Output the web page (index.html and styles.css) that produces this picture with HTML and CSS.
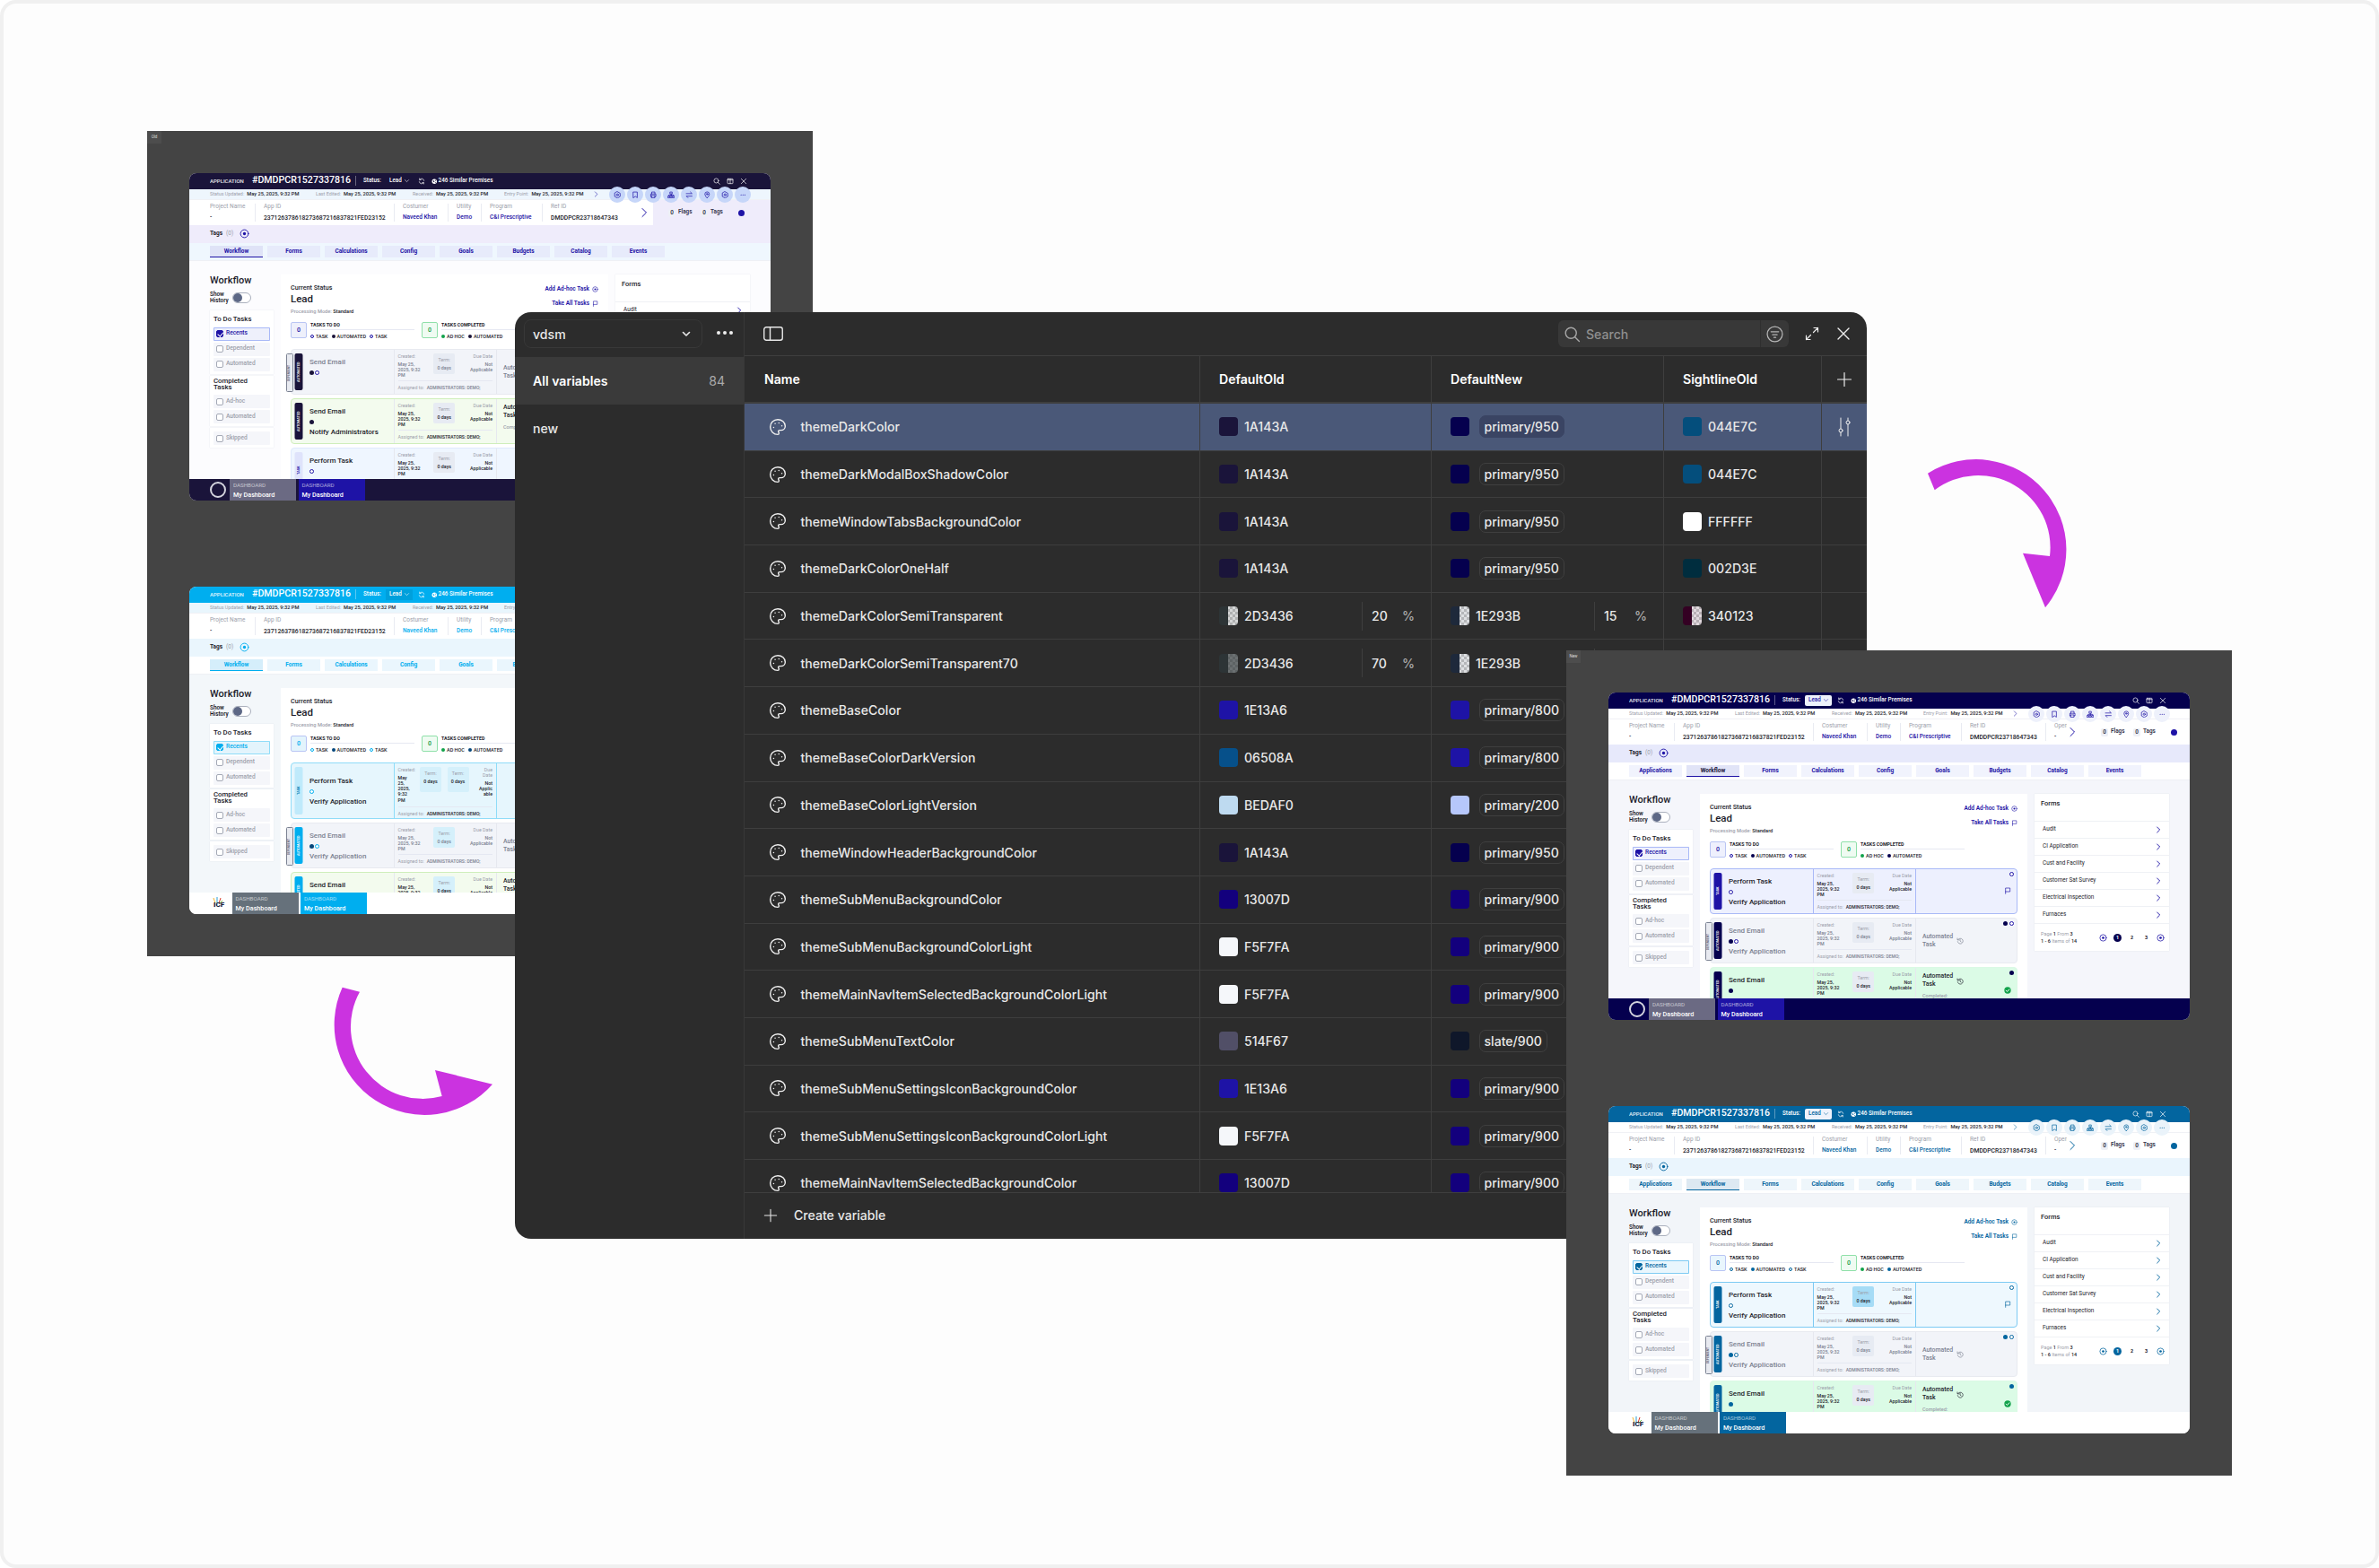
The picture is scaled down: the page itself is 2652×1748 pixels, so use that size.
FILE: index.html
```html
<!DOCTYPE html>
<html lang="en">
<head>
  <meta charset="UTF-8">
  <title>Theme variables</title>
  <link rel="stylesheet" href="styles.css">
</head>
<body>

<!-- shared icons -->
<svg class="defs" width="0" height="0">
  <symbol id="i-palette" viewBox="0 0 24 24"><path d="M12 2C6.5 2 2 6.5 2 12s4.5 10 10 10c.926 0 1.648-.746 1.648-1.688 0-.437-.18-.835-.437-1.125-.29-.289-.438-.652-.438-1.125a1.64 1.64 0 0 1 1.668-1.668h1.996c3.051 0 5.555-2.503 5.555-5.554C21.965 6.012 17.461 2 12 2z"/><circle cx="13.5" cy="6.5" r=".9" class="fill"/><circle cx="17.5" cy="10.5" r=".9" class="fill"/><circle cx="8.5" cy="7.5" r=".9" class="fill"/><circle cx="6.5" cy="12.5" r=".9" class="fill"/></symbol>
  <symbol id="i-down" viewBox="0 0 12 12"><path d="M2.5 4.5 6 8l3.5-3.5"/></symbol>
  <symbol id="i-right" viewBox="0 0 12 12"><path d="M4 1.5 8.5 6 4 10.5"/></symbol>
  <symbol id="i-x" viewBox="0 0 12 12"><path d="M2 2l8 8M10 2l-8 8"/></symbol>
  <symbol id="i-plus" viewBox="0 0 12 12"><path d="M6 1v10M1 6h10"/></symbol>
  <symbol id="i-search" viewBox="0 0 12 12"><circle cx="5.2" cy="5.2" r="3.8"/><path d="M8 8l3 3"/></symbol>
  <symbol id="i-cols" viewBox="0 0 12 12"><rect x="1.5" y="2" width="9" height="8" rx="1"/><path d="M6 2v8M1.5 4h9"/></symbol>
  <symbol id="i-refresh" viewBox="0 0 12 12"><path d="M10 5a4 4 0 0 0-7.200-1.500M2 7a4 4 0 0 0 7.200 1.500"/><path d="M2.500 1.500v2.300h2.300M9.500 10.500V8.200H7.200"/></symbol>
  <symbol id="i-globe" viewBox="0 0 12 12"><circle cx="6" cy="6" r="5" class="fill"/><path class="knock" d="M3 3.500l3 1.500v2l-2 .5zM7.500 2.500l2 1.500-1.500 1.500zM7 8l2-.5-1 2z"/></symbol>
  <symbol id="i-pin" viewBox="0 0 12 12"><path d="M6 11S2.500 7.500 2.500 4.800a3.500 3.500 0 0 1 7 0C9.500 7.500 6 11 6 11z"/><circle cx="6" cy="4.800" r="1.200"/></symbol>
  <symbol id="i-gear" viewBox="0 0 12 12"><path d="M6 1l4.300 2.500v5L6 11 1.700 8.500v-5z"/><circle cx="6" cy="6" r="1.600"/></symbol>
  <symbol id="i-mark" viewBox="0 0 12 12"><path d="M3 1.500h6v9L6 8.300 3 10.500z"/></symbol>
  <symbol id="i-print" viewBox="0 0 12 12"><path d="M3.500 4.500v-3h5v3M3.500 8.500H2V4.500h8v4H8.500"/><path d="M3.500 7h5v3.500h-5z"/></symbol>
  <symbol id="i-org" viewBox="0 0 12 12"><rect x="4.500" y="1.500" width="3" height="3"/><rect x="1" y="8" width="2.500" height="2.500"/><rect x="4.700" y="8" width="2.500" height="2.500"/><rect x="8.500" y="8" width="2.500" height="2.500"/><path d="M6 4.500V8M2.200 8V6.200h7.600V8"/></symbol>
  <symbol id="i-swap" viewBox="0 0 12 12"><path d="M1.500 4h9L8 1.500M10.500 8h-9L4 10.500"/></symbol>
  <symbol id="i-more" viewBox="0 0 12 12"><circle cx="3" cy="6" r=".8" class="fill"/><circle cx="6" cy="6" r=".8" class="fill"/><circle cx="9" cy="6" r=".8" class="fill"/></symbol>
  <symbol id="i-add" viewBox="0 0 12 12"><circle cx="6" cy="6" r="4.800"/><circle cx="6" cy="6" r="1.800" class="fill"/></symbol>
  <symbol id="i-flag" viewBox="0 0 12 12"><path d="M2.500 11V1.500h7.500v6H2.500"/></symbol>
  <symbol id="i-back" viewBox="0 0 12 12"><path d="M2.500 3.800a4.500 4.500 0 1 1-.6 3.200"/><path d="M1.500 1.500v2.800h2.800M6 3.500V6l1.800 1.500"/></symbol>
  <symbol id="i-tick" viewBox="0 0 12 12"><circle cx="6" cy="6" r="5.500" class="fill"/><path class="knock-line" d="M3.300 6.200l2 2 3.500-4"/></symbol>
</svg>

<div class="canvas">

  <section class="frame frame-old" id="frameOld"></section>

  <!-- variables window -->
  <section class="panel">
    <aside class="side">
      <div class="side-top">
        <div class="coll-select"><span>vdsm</span><svg class="ico chev-sm"><use href="#i-down"/></svg></div>
        <div class="coll-more"><i></i><i></i><i></i></div>
      </div>
      <div class="side-item on"><span>All variables</span><span class="count">84</span></div>
      <div class="side-item"><span>new</span></div>
    </aside>

    <div class="main">
      <div class="toolbar">
        <svg class="ico panel-toggle" viewBox="0 0 22 16"><rect x=".75" y=".75" width="20.500" height="14.500" rx="2.500"/><path d="M7.500 1v14"/></svg>
        <div class="search">
          <div class="search-box">
            <svg class="ico search-ico"><use href="#i-search"/></svg>
            <span>Search</span>
          </div>
          <div class="search-filter">
            <svg class="ico" viewBox="0 0 18 18"><circle cx="9" cy="9" r="8"/><path d="M5 6.500h8M6.500 9.500h5M8 12.500h2"/></svg>
          </div>
        </div>
        <svg class="ico expand" viewBox="0 0 16 16"><path d="M10 1.500h4.500V6M14.500 1.500 9.500 6.500M6 14.500H1.500V10M1.500 14.500l5-5"/></svg>
        <svg class="ico close"><use href="#i-x"/></svg>
      </div>

      <div class="grid thead">
        <div class="cell cell-name">Name</div>
        <div class="cell cell-a">DefaultOld</div>
        <div class="cell cell-b">DefaultNew</div>
        <div class="cell cell-c">SightlineOld</div>
        <div class="cell cell-end"><svg class="ico add-col"><use href="#i-plus"/></svg></div>
      </div>

      <div class="tbody" id="rows"></div>

      <div class="create">
        <svg class="ico add-var"><use href="#i-plus"/></svg>
        <span>Create variable</span>
      </div>
    </div>
  </section>

  <section class="frame frame-new" id="frameNew"></section>

  <svg class="arrow arrow-left" viewBox="0 0 720 660"><path d="M125 122A302 302 0 0 0 627 446L435 399L458 486A241 241 0 0 1 183 137Z"/></svg>
  <svg class="arrow arrow-right" viewBox="0 0 720 660"><path d="M147 143A302 302 0 0 1 540 592L465 410L555 420A241 241 0 0 0 170 199Z"/></svg>
</div>

<script src="script.js"></script>
</body>
</html>
```

FILE: styles.css
```css
* { box-sizing: border-box; }

body {
  margin: 0;
  background: #fff;
  font-family: Inter, "Liberation Sans", sans-serif;
}

.defs { position: absolute; }
.fill { fill: currentColor; stroke: none; }

.ico {
  fill: none;
  stroke: currentColor;
  stroke-width: 1.2;
  stroke-linecap: round;
  stroke-linejoin: round;
}

.canvas {
  position: relative;
  width: 2652px;
  height: 1748px;
  overflow: hidden;
  background: #fdfdfd;
  border-radius: 18px;
  box-shadow: inset 0 0 0 4px #f0f0f0;
}

/* arrows */
.arrow {
  position: absolute;
  width: 240px;
  height: 220px;
  fill: #cb33e0;
}
.arrow-left { left: 340px; top: 1060px; }
.arrow-right { left: 2100px; top: 480px; }

/* grey artboards */
.frame {
  position: absolute;
  width: 742px;
  height: 920px;
  padding: 47px;
  display: flex;
  flex-direction: column;
  gap: 96px;
  background: #444;
}
.frame-old { left: 164px; top: 146px; }
.frame-new { left: 1746px; top: 725px; }

.frame-tag {
  position: absolute;
  left: 0;
  top: 0;
  width: 16px;
  height: 14px;
  background: #4d4d4d;
  color: #ddd;
  font: 4.500px/14px Roboto, sans-serif;
  text-align: center;
}

/* big dark window */
.panel {
  position: absolute;
  left: 574px;
  top: 348px;
  width: 1507px;
  height: 1033px;
  display: flex;
  background: #2c2c2c;
  border-radius: 18px;
  overflow: hidden;
  color: #e8e8e8;
  font-size: 14.100px;
  font-weight: 500;
}

.side {
  width: 256px;
  flex: none;
  border-right: 1px solid #383838;
}

.side-top {
  height: 50px;
  padding: 8px 0 0 10px;
  display: flex;
}

.coll-select {
  width: 199px;
  height: 32px;
  padding: 0 11px 0 9px;
  display: flex;
  align-items: center;
  justify-content: space-between;
  border: 1px solid #383838;
  border-radius: 8px;
}
.chev-sm { width: 12px; height: 12px; stroke-width: 1.6; }

.coll-more {
  margin: 13px 0 0 16px;
  display: flex;
  gap: 3px;
}
.coll-more i {
  width: 4px;
  height: 4px;
  border-radius: 50%;
  background: #eee;
}

.side-item {
  height: 52px;
  padding: 0 21px 0 20px;
  display: flex;
  align-items: center;
  justify-content: space-between;
}
.side-item.on {
  height: 53px;
  background: #3a3a3a;
  color: #fff;
  font-weight: 600;
}
.count { color: #aaa; font-weight: 400; }

.main {
  flex: 1;
  min-width: 0;
  display: flex;
  flex-direction: column;
}

.toolbar {
  height: 49px;
  flex: none;
  padding: 0 17px 0 21px;
  display: flex;
  align-items: center;
  border-bottom: 1px solid #3e3e3e;
}
.panel-toggle { width: 22px; height: 16px; stroke-width: 1.4; }

.search {
  width: 257px;
  height: 30px;
  margin-left: auto;
  display: flex;
  background: #383838;
  border-radius: 6px;
  color: #8f8f8f;
}
.search-box {
  width: 226px;
  padding-left: 6px;
  display: flex;
  align-items: center;
  gap: 6px;
  border-right: 1px solid #2f2f2f;
}
.search-ico { width: 19px; height: 19px; stroke-width: .9; color: #a5a5a5; }
.search-filter {
  flex: 1;
  display: flex;
  align-items: center;
  justify-content: center;
  color: #b4b4b4;
}
.search-filter svg { width: 19px; height: 19px; }
.expand { width: 16px; height: 16px; margin-left: 18px; color: #eee; }
.close { width: 18px; height: 18px; margin-left: 18px; color: #eee; stroke-width: .9; }

.grid {
  display: grid;
  grid-template-columns: 507px 258px 259px 176px 51px;
}
.thead {
  height: 53px;
  flex: none;
  border-bottom: 2px solid #3e3e3e;
  color: #fff;
  font-weight: 600;
}

.tbody {
  flex: 1;
  min-height: 0;
  overflow: hidden;
}

.row {
  height: 52.7px;
  border-bottom: 1px solid #3e3e3e;
}
.row.on { background: #4a5878; }

.cell {
  display: flex;
  align-items: center;
  min-width: 0;
}
.cell-name { padding-left: 22px; }
.row .cell-name { padding-left: 27px; gap: 15.500px; }
.cell-a, .cell-b, .cell-c { padding-left: 21px; border-left: 1px solid #3e3e3e; }
.cell-end { justify-content: center; border-left: 1px solid #3e3e3e; }

.pal { width: 20px; height: 20px; color: #f0f0f0; stroke-width: 1.7; }
.add-col { width: 18px; height: 18px; stroke-width: .8; color: #eee; }
.tune { width: 16px; height: 22px; color: #eee; stroke-width: 1; }

.sw {
  width: 21px;
  height: 21px;
  flex: none;
  margin-right: 7px;
  border-radius: 4px;
  background: var(--sw);
}
.sw.alpha {
  background:
    linear-gradient(90deg, var(--sw) 50%, var(--sw-a) 50%),
    repeating-conic-gradient(#fff 0 25%, #cfcfcf 0 50%) 0 0 / 6px 6px;
}

.token {
  margin-left: 3.500px;
  height: 25px;
  padding: 0 5px;
  display: flex;
  align-items: center;
  border: 1px solid #3f3f3f;
  border-radius: 7px;
}
.row.on .token { background: #3a4463; border-color: #3a4463; }

.opacity {
  width: 77px;
  height: 32px;
  margin-left: auto;
  padding: 0 18px 0 10px;
  display: flex;
  align-items: center;
  justify-content: space-between;
  border-left: 1px solid #3e3e3e;
}
.opacity i { color: #aaa; font-style: normal; }

.create {
  height: 52px;
  flex: none;
  padding: 0 0 2px 21px;
  display: flex;
  align-items: center;
  gap: 18px;
  border-top: 1px solid #3e3e3e;
}
.add-var { width: 16px; height: 16px; stroke-width: .8; }

/* app screenshots inside the artboards */
.app {
  --head: #1a143a;
  --accent: #1e13a6;
  --edge: #a9b9f7;
  --soft: #eef0fb;
  --meta: #eef6fd;
  --tags: #efecfb;
  --tabs: #eff7fe;
  --tab: #e7ebfb;
  --tab-on: #dfe3f7;
  --bg: #fcfcfe;
  --foot: #1a143a;
  --tool: #c6d6f9;
  --dim: #9ca0ab;
  position: relative;
  width: 648px;
  height: 365px;
  flex: none;
  display: flex;
  flex-direction: column;
  overflow: hidden;
  border-radius: 8px;
  background: #fff;
  color: #1d1d2b;
  font: 500 5.700px/1.2 Roboto, sans-serif;
}
.app svg { display: block; }
.app .ico { stroke-width: 1; }

.app.sky {
  --head: #00aeef;
  --accent: #00aeef;
  --edge: #8fdcf8;
  --soft: #e3f4fc;
  --meta: #e9f6fd;
  --tags: #eaf6fd;
  --tabs: #fff;
  --tab: #eaf6fd;
  --tab-on: #d5eefb;
  --bg: #f3f7fa;
  --foot: #fff;
  --tool: #c6e9f9;
}
.app.indigo {
  --head: #05004e;
  --soft: #eef0fd;
  --meta: #fff;
  --tags: #e7e9fb;
  --tabs: #fff;
  --tab: #f1f3fd;
  --tab-on: #e1e4f7;
  --bg: #f5f6fb;
  --foot: #05004e;
  --tool: #eef1fb;
}
.app.ocean {
  --head: #03659f;
  --accent: #03659f;
  --edge: #7dcaf3;
  --soft: #e9f6fd;
  --meta: #fff;
  --tags: #eaf5fd;
  --tabs: #fff;
  --tab: #eef6fb;
  --tab-on: #dde9f2;
  --bg: #f2f5f9;
  --foot: #fff;
  --tool: #eaf3fa;
}

.app-head {
  height: 17.5px;
  flex: none;
  padding: 0 0 0 23px;
  display: flex;
  align-items: center;
  background: var(--head);
  color: #fff;
}
.kicker { width: 47px; font-size: 6px; opacity: .9; }
.app-id { width: 115px; font-size: 10.600px; font-weight: 500; white-space: nowrap; }
.vr { width: 1px; height: 11px; margin-right: 8px; background: rgba(255,255,255,.35); }
.stat { width: 25px; font-size: 6.300px; }
.lead {
  width: 30px;
  height: 12px;
  padding-left: 4px;
  margin-right: 6px;
  display: flex;
  align-items: center;
  gap: 2px;
  font-size: 6.300px;
}
.lead svg { width: 7px; height: 7px; }
.app.indigo .lead, .app.ocean .lead {
  background: #eef2fb;
  border-radius: 2px;
  color: var(--accent);
}
.app.sky .lead { background: rgba(0,0,0,.08); }
.app-head .mini { width: 8px; height: 8px; margin-right: 7px; }
.app-head .globe { width: 6.5px; height: 6.500px; margin-right: 1px; }
.knock { fill: var(--head); stroke: none; }
.knock-line { stroke: #fff; stroke-width: 1.4; fill: none; }
.similar { font-size: 6.400px; }
.head-tools {
  margin-left: auto;
  width: 64px;
  padding-right: 26px;
  display: flex;
  justify-content: space-between;
}
.head-tools svg { width: 8px; height: 8px; flex: none; }

.meta {
  height: 12.5px;
  flex: none;
  padding-left: 23px;
  display: flex;
  align-items: center;
  background: var(--meta);
  border-bottom: 1px solid #f0f1f5;
  white-space: nowrap;
}
.meta-item { display: flex; gap: 3px; width: 118px; }
.meta-item:nth-child(2) { width: 108px; }
.meta-item:nth-child(3) { width: 102px; }
.meta-item:nth-child(4) { width: 99px; }
.meta-item span { color: var(--dim); font-size: 5.400px; font-weight: 400; }
.meta svg { width: 7px; height: 7px; color: var(--accent); }

.tools {
  position: absolute;
  left: 468px;
  top: 15px;
  display: flex;
  gap: 2px;
}
.tool {
  width: 18px;
  height: 18px;
  display: flex;
  align-items: center;
  justify-content: center;
  border-radius: 50%;
  background: var(--tool);
  color: var(--accent);
}
.tool svg { width: 8.500px; height: 8.500px; }

.info {
  height: 28px;
  flex: none;
  padding-left: 23px;
  display: grid;
  grid-template-columns: 50px 155px 60px 37px 68px 94px 24px 38px 1fr;
  align-items: center;
  background: #fff;
}
.info-cell {
  height: 20px;
  display: flex;
  flex-direction: column;
  justify-content: space-between;
  padding-left: 9px;
  border-left: 1px solid #e9ebf2;
  white-space: nowrap;
  overflow: hidden;
}
.info-cell:first-child { padding-left: 0; border: 0; }
.info-cell span { color: var(--dim); font-size: 6.500px; font-weight: 400; }
.info-cell b { font-size: 6.500px; font-weight: 500; }
.info-cell .mono { font-size: 6.800px; }
.info-cell .link { color: var(--accent); }
.open-chev { width: 12px; height: 14px; color: var(--accent); }
.counters {
  display: flex;
  align-items: center;
  font-weight: 600;
  font-size: 6.400px;
  color: #33334a;
}
.counters u {
  width: 8px;
  height: 9px;
  margin-right: 3px;
  border-radius: 2px;
  background: #eef0f6;
  text-decoration: none;
  text-align: center;
  line-height: 9px;
}
.counters em { width: 25px; font-style: normal; }
.counters em + u { margin-left: 0; }
.counters i {
  width: 7px;
  height: 7px;
  margin-left: 6px;
  border-radius: 50%;
  background: var(--accent);
}
.app.navy .info { grid-template-columns: 50px 155px 60px 37px 68px 94px 14px 16px 1fr; }
.app.navy .counters { height: 28px; padding-left: 17px; background: var(--tags); }

.tags {
  height: 19.500px;
  flex: none;
  padding-left: 23px;
  display: flex;
  align-items: center;
  gap: 4px;
  background: var(--tags);
  font-size: 6.500px;
  font-weight: 700;
}
.tags span { color: var(--dim); font-weight: 400; margin-right: 3px; }
.tags svg { width: 11px; height: 11px; color: var(--accent); }

.tabs {
  height: 20px;
  flex: none;
  padding: 3.500px 0 0 23px;
  display: flex;
  gap: 5px;
  background: var(--tabs);
  border-bottom: 1px solid #eef0f5;
}
.tab {
  width: 59px;
  height: 13px;
  background: var(--tab);
  color: var(--accent);
  font-size: 6.500px;
  font-weight: 700;
  line-height: 13px;
  text-align: center;
}
.tab.on {
  background: var(--tab-on);
  border-bottom: 1.2px solid var(--accent);
}
.app.indigo .tab.on { color: #1a143a; }

.app-body {
  flex: 1;
  min-height: 0;
  padding: 15px 0 0 23px;
  display: flex;
  align-items: flex-start;
  gap: 8px;
  overflow: hidden;
  background: var(--bg);
}

.wf { width: 71px; flex: none; }
.wf h3 { margin: 0; height: 13px; font-size: 11px; font-weight: 500; line-height: 13px; }
.history {
  height: 12px;
  margin: 7px 0 8px;
  display: flex;
  align-items: center;
  gap: 3px;
  font-size: 6.400px;
  line-height: 6.800px;
}
.history b { width: 22px; font-weight: 600; }
.toggle {
  position: relative;
  width: 21px;
  height: 12px;
  border: 1px solid #aab0bd;
  border-radius: 6px;
  background: #fff;
}
.toggle::after {
  content: "";
  position: absolute;
  left: 0;
  top: 0;
  width: 10px;
  height: 10px;
  border-radius: 50%;
  background: #5d6886;
}

.wf-card {
  margin-bottom: 2px;
  padding: 0 4px 1px;
  background: #fff;
  box-shadow: 0 0 1px #d7dae2;
}
.wf-card h4 {
  margin: 0;
  padding: 5px 0 5px;
  font-size: 7.800px;
  font-weight: 500;
  line-height: 9px;
}
.wf-card.two h4 { width: 44px; padding: 2px 0 4px; line-height: 7.800px; }
.wf-card.bare { padding-top: 4px; }
.chk {
  height: 15px;
  margin-bottom: 2px;
  padding-left: 3px;
  display: flex;
  align-items: center;
  gap: 3px;
  background: #f5f6fa;
  border-radius: 1px;
  color: var(--dim);
  font-size: 6.600px;
}
.chk i {
  position: relative;
  width: 8px;
  height: 8px;
  border: 1px solid #a4a9b6;
  border-radius: 2px;
  background: #fff;
}
.chk.on {
  background: var(--soft);
  box-shadow: inset 0 0 0 1px var(--edge);
  color: var(--accent);
}
.chk.on i { background: var(--accent); border-color: var(--accent); }
.chk.on i::after {
  content: "";
  position: absolute;
  left: 1.500px;
  top: 0;
  width: 2.500px;
  height: 4.500px;
  border: solid #fff;
  border-width: 0 1px 1px 0;
  transform: rotate(40deg);
}

.wf-main {
  width: 365px;
  flex: none;
  padding: 11px 11px 0 11px;
  background: #fff;
}
.status-top { display: flex; justify-content: space-between; }
.status-top h5 { margin: 0; font-size: 7.200px; font-weight: 500; line-height: 8px; }
.status-top h2 { margin: 2px 0 4px; font-size: 11.500px; font-weight: 500; line-height: 13px; }
.status-top p { margin: 0; color: var(--dim); font-size: 5.700px; line-height: 6px; }
.status-top p b { color: #1d1d2b; font-weight: 500; }
.links {
  padding-top: 2px;
  display: flex;
  flex-direction: column;
  align-items: flex-end;
  gap: 9px;
  color: var(--accent);
  font-size: 6.500px;
  font-weight: 600;
  line-height: 7px;
}
.links div { display: flex; align-items: center; gap: 3px; }
.links svg { width: 7px; height: 7px; }

.tally {
  margin-top: 9px;
  display: flex;
  gap: 8px;
}
.tally-box { width: 138px; display: flex; gap: 4px; }
.tally-num {
  width: 18px;
  height: 18px;
  flex: none;
  border: 1px solid #b9c5f4;
  border-radius: 2px;
  background: var(--soft);
  color: var(--accent);
  font-size: 7px;
  line-height: 16px;
  text-align: center;
}
.tally-num.ok { border-color: #8fe0a9; background: #effbf2; color: #159a45; }
.tally-txt { flex: 1; }
.tally-txt h6 {
  margin: 0;
  padding-bottom: 1px;
  border-bottom: 1px solid #e6e8f2;
  font-size: 5.300px;
  font-weight: 700;
  line-height: 7px;
}
.tally-txt p {
  margin: 4px 0 0;
  display: flex;
  align-items: center;
  gap: 2px;
  font-size: 5.500px;
  line-height: 6px;
}
.tally-txt i { width: 4px; height: 4px; margin-left: 2px; border-radius: 50%; }
.tally-txt i:first-child { margin-left: 0; }
.dot-open { border: .7px solid var(--accent); background: #fff; }
.dot-full { background: var(--head); }
.app.sky .dot-full { background: #06477c; }
.dot-green { background: #12a24b; }

.task-list {
  margin-top: 11px;
  display: flex;
  flex-direction: column;
  gap: 4px;
}
.task {
  position: relative;
  height: 51px;
  display: grid;
  grid-template-columns: 113.500px 115.500px 1fr;
  border: .8px solid #e8eaf0;
  border-radius: 4px;
  background: #f2f4f9;
}
.task.wide { height: 63px; }
.task.cur { border: 1px solid var(--edge); background: #edf0fe; }
.task.done { border-color: #daf9e5; background: #dbfbe6; }
.task.old { border-color: #cfeebb; background: #f3fbee; }
.task.pend { border-color: #dfeafd; background: #eff6ff; }
.app.sky .task.cur { background: #e6f6fd; }
.app.ocean .task.cur { background: #eef8fe; }

.task-a { display: flex; padding: 4px 0 4px 4px; gap: 7.500px; min-width: 0; }
.stripe {
  width: 8.500px;
  flex: none;
  display: flex;
  align-items: center;
  justify-content: center;
  writing-mode: vertical-rl;
  transform: rotate(180deg);
  border-radius: 2px;
  background: var(--head);
  color: #fff;
  font-size: 3.800px;
  font-weight: 700;
}
.task.cur .stripe { background: #1e13a6; }
.app.sky .task.cur .stripe { background: #bfeafb; color: #007bb0; }
.app.ocean .task.cur .stripe { background: #03659f; }
.task.pend .stripe { background: #dfe3fb; color: #1e13a6; }
.dep-tag {
  position: absolute;
  left: -5.600px;
  top: 4px;
  width: 8px;
  height: 43px;
  display: flex;
  align-items: center;
  justify-content: center;
  writing-mode: vertical-rl;
  transform: rotate(180deg);
  border: .8px solid #7b8292;
  border-radius: 1.500px;
  background: #e8eaf0;
  color: #667;
  font-size: 3.200px;
  font-weight: 700;
}
.task-txt { padding-top: 5px; min-width: 0; }
.wide .task-txt { padding-top: 11px; }
.task-txt b { display: block; font-size: 8px; font-weight: 500; line-height: 9px; }
.task-txt p { margin: 5px 0 0; display: flex; gap: 1px; height: 5px; }
.task-txt p i { width: 5px; height: 5px; border-radius: 50%; }
.task-txt span { display: block; margin-top: 4px; font-size: 8px; line-height: 9px; white-space: nowrap; }
.task.faded .task-txt b, .task.faded .task-txt span { color: #7c8291; }

.task-b {
  padding: 0 4px;
  border-left: .8px solid #e6e8ef;
  border-right: .8px solid #e6e8ef;
  font-size: 5.300px;
  line-height: 6.200px;
}
.task.cur .task-b { border-color: var(--edge); }
.task-top {
  height: 35.500px;
  padding-top: 4px;
  display: flex;
  justify-content: space-between;
  border-bottom: 1px solid #e5e8f2;
}
.task.wide .task-top { height: 49px; }
.task-top span { display: block; margin-bottom: 3px; color: var(--dim); font-weight: 400; }
.created { width: 30px; }
.wide .created { width: 18px; }
.term {
  width: 24px;
  height: 23px;
  margin-top: 0;
  padding-top: 4px;
  border-radius: 2px;
  background: #e7ebf3;
  text-align: center;
  line-height: 6.200px;
}
.wide .term { height: 28px; }
.term span { margin: 0 0 3px; }
.app.sky .term { background: #d5f0fb; }
.app.ocean .task.cur .term { background: #a6dcf6; }
.due { width: 32px; text-align: right; }
.wide .due { width: 20px; }
.assign { padding-top: 4px; white-space: nowrap; font-size: 5px; }
.assign span { color: var(--dim); font-weight: 400; margin-right: 3px; font-size: 5.300px; }
.task.faded .task-b { color: #7c8291; }

.task-c { position: relative; padding: 16px 0 0 7px; font-size: 6.900px; line-height: 9.300px; }
.task-c.finished { padding-top: 5.500px; font-weight: 500; }
.task-c .auto { width: 36px; display: block; }
.task.faded .task-c { color: #7c8291; }
.task-c .hist { position: absolute; left: 45px; top: 21px; width: 8px; height: 8px; }
.task-c.finished .hist { top: 11px; }
.task-c small { display: block; margin-top: 3px; color: var(--dim); font-size: 5.500px; }
.dots {
  position: absolute;
  right: 3px;
  top: 3px;
  display: flex;
  gap: 2px;
}
.dots i { width: 5px; height: 5px; border-radius: 50%; }
.task-c .flag { position: absolute; right: 6px; top: 20.500px; width: 8px; height: 8px; color: var(--accent); }
.task-c .tick { position: absolute; right: 6px; top: 21px; width: 8px; height: 8px; color: #12a24b; }

.forms {
  width: 150px;
  flex: none;
  background: #fff;
  box-shadow: 0 0 1px #d7dae2;
}
.forms h5 {
  margin: 0;
  height: 30.500px;
  padding: 7px 0 0 7px;
  font-size: 7.500px;
  font-weight: 500;
  line-height: 8px;
}
.form-row {
  height: 19px;
  padding: 0 8px 0 9px;
  display: flex;
  align-items: center;
  justify-content: space-between;
  border-top: 1.500px solid #eff1f5;
  font-size: 6.400px;
  font-weight: 400;
}
.form-row svg { width: 8px; height: 8px; color: var(--accent); }
.app .form-row .ico { stroke-width: 1.400; }
.pager {
  height: 31px;
  padding: 0 5px 0 7px;
  display: flex;
  align-items: center;
  justify-content: space-between;
  border-top: 1.500px solid #eff1f5;
  font-size: 5.500px;
  line-height: 8.500px;
}
.pager span { color: var(--dim); font-weight: 400; }
.pages { display: flex; align-items: center; gap: 7px; font-weight: 700; }
.pages svg { width: 9px; height: 9px; color: var(--accent); }
.pages u {
  width: 9px;
  height: 9px;
  text-align: center;
  line-height: 9px;
  text-decoration: none;
  border-radius: 50%;
}
.pages .cur { background: var(--head); color: #fff; }

.app-foot {
  height: 24px;
  flex: none;
  padding-left: 23px;
  display: flex;
  align-items: stretch;
  background: var(--foot);
}
.logo-ring {
  width: 18px;
  height: 18px;
  margin: 3px 4px 0 0;
  border: 2.500px solid #d4d4de;
  border-radius: 50%;
}
.logo-icf {
  width: 20px;
  margin-right: 4.500px;
  padding-top: 4px;
  color: #14213d;
  font: 800 8px/8px Roboto, sans-serif;
}
.logo-icf svg { width: 12px; height: 9px; margin-left: 2px; }
.logo-icf b { display: block; margin-top: -3px; padding-left: 4px; font-weight: 900; }
.dash {
  width: 74px;
  padding: 3px 0 0 4px;
  color: #fff;
  font-size: 7.200px;
  line-height: 9.500px;
  background: #6b6a83;
}
.dash span { display: block; opacity: .6; font-size: 6.200px; font-weight: 400; }
.dash + .dash { margin-left: 2.500px; background: var(--accent); }
.app.sky .dash:not(.dash + .dash), .app.ocean .dash:not(.dash + .dash) { background: #66717b; }
```

FILE: script.js
```js
// variables table
const tokens = {
  "primary/950": "#05004e",
  "primary/900": "#13007d",
  "primary/800": "#1e13a6",
  "primary/200": "#b6c7fb",
  "slate/900": "#0f172a"
};

const rows = [
  ["themeDarkColor", "1A143A", "primary/950", "044E7C"],
  ["themeDarkModalBoxShadowColor", "1A143A", "primary/950", "044E7C"],
  ["themeWindowTabsBackgroundColor", "1A143A", "primary/950", "FFFFFF"],
  ["themeDarkColorOneHalf", "1A143A", "primary/950", "002D3E"],
  ["themeDarkColorSemiTransparent", "2D3436:20", "1E293B:15", "340123:15"],
  ["themeDarkColorSemiTransparent70", "2D3436:70", "1E293B:15"],
  ["themeBaseColor", "1E13A6", "primary/800"],
  ["themeBaseColorDarkVersion", "06508A", "primary/800"],
  ["themeBaseColorLightVersion", "BEDAF0", "primary/200"],
  ["themeWindowHeaderBackgroundColor", "1A143A", "primary/950"],
  ["themeSubMenuBackgroundColor", "13007D", "primary/900"],
  ["themeSubMenuBackgroundColorLight", "F5F7FA", "primary/900"],
  ["themeMainNavItemSelectedBackgroundColorLight", "F5F7FA", "primary/900"],
  ["themeSubMenuTextColor", "514F67", "slate/900"],
  ["themeSubMenuSettingsIconBackgroundColor", "1E13A6", "primary/900"],
  ["themeSubMenuSettingsIconBackgroundColorLight", "F5F7FA", "primary/900"],
  ["themeMainNavItemSelectedBackgroundColor", "13007D", "primary/900"]
];

function valueCell(val, cls) {
  if (!val) return `<div class="cell ${cls}"></div>`;
  if (tokens[val]) {
    return `<div class="cell ${cls}"><span class="sw" style="--sw:${tokens[val]}"></span><span class="token">${val}</span></div>`;
  }
  const [hex, pct] = val.split(":");
  if (!pct) {
    return `<div class="cell ${cls}"><span class="sw" style="--sw:#${hex}"></span><span>${hex}</span></div>`;
  }
  const a = Math.round(pct * 2.55).toString(16).padStart(2, "0");
  const box = cls === "cell-c" ? "" : `<div class="opacity"><span>${pct}</span><i>%</i></div>`;
  return `<div class="cell ${cls}"><span class="sw alpha" style="--sw:#${hex};--sw-a:#${hex}${a}"></span><span>${hex}</span>${box}</div>`;
}

document.getElementById("rows").innerHTML = rows.map((r, i) => `
  <div class="grid row${i === 0 ? " on" : ""}">
    <div class="cell cell-name"><svg class="ico pal"><use href="#i-palette"/></svg><span>${r[0]}</span></div>
    ${valueCell(r[1], "cell-a")}
    ${valueCell(r[2], "cell-b")}
    ${valueCell(r[3], "cell-c")}
    <div class="cell cell-end">${i === 0 ? '<svg class="ico tune" viewBox="0 0 16 22"><path d="M4 1v12M4 17v4M12 1v3M12 8v13"/><circle cx="4" cy="15" r="2"/><circle cx="12" cy="6" r="2"/></svg>' : ""}</div>
  </div>`).join("");

// app screenshots
const icon = (name, cls = "") => `<svg class="ico ${cls}"><use href="#i-${name}"/></svg>`;
const when = "May 25, 2025, 9:32 PM";

function taskRow(t) {
  const dots = t.dots.map(d => `<i class="dot-${d}"></i>`).join("");
  const mid = t.wide
    ? `<div class="created"><span>Created:</span>May 25, 2025, 9:32 PM</div>
       <div class="term"><span>Term:</span>0 days</div><div class="term"><span>Term:</span>0 days</div>
       <div class="due"><span>Due Date</span>Not Applic able</div>`
    : `<div class="created"><span>Created:</span>${when}</div>
       <div class="term"><span>Term:</span>0 days</div>
       <div class="due"><span>Due Date</span>Not Applicable</div>`;
  const end = t.auto
    ? `<span class="auto">Automated Task</span>${icon("back", "hist")}${t.done ? `<small>Completed:</small>${icon("tick", "tick")}` : ""}`
    : icon("flag", "flag");
  return `
    <div class="task ${t.cls}${t.wide ? " wide" : ""}">
      ${t.dep ? '<span class="dep-tag">DEPENDENT</span>' : ""}
      <div class="task-a">
        <span class="stripe">${t.tag}</span>
        <div class="task-txt"><b>${t.title}</b><p>${dots}</p><span>${t.sub || ""}</span></div>
      </div>
      <div class="task-b">
        <div class="task-top">${mid}</div>
        <div class="assign"><span>Assigned to:</span>ADMINISTRATORS: DEMO;</div>
      </div>
      <div class="task-c${t.done ? " finished" : ""}">${end}<div class="dots">${dots}</div></div>
    </div>`;
}

const taskDep = { cls: "faded", dep: true, tag: "AUTOMATED", title: "Send Email", sub: "Verify Application", dots: ["full", "open"], auto: true };
const taskCur = { cls: "cur", tag: "TASK", title: "Perform Task", sub: "Verify Application", dots: ["open"] };
const taskDone = { cls: "done", tag: "AUTOMATED", title: "Send Email", sub: "Notify Administrators", dots: ["full"], auto: true, done: true };

const apps = [
  { theme: "navy", tabs: false, logo: "ring", tasks: [
    { ...taskDep, sub: "" }, { ...taskDone, cls: "old" }, { ...taskCur, cls: "pend" }
  ] },
  { theme: "sky", tabs: false, logo: "icf", tasks: [{ ...taskCur, wide: true }, taskDep, { ...taskDone, cls: "old" }] },
  { theme: "indigo", tabs: true, logo: "ring", tasks: [taskCur, taskDep, taskDone] },
  { theme: "ocean", tabs: true, logo: "icf", tasks: [taskCur, taskDep, taskDone] }
];

const tabNames = ["Workflow", "Forms", "Calculations", "Config", "Goals", "Budgets", "Catalog", "Events"];
const toolIcons = ["gear", "mark", "print", "org", "swap", "pin", "gear", "more"];
const formNames = ["Audit", "CI Application", "Cust and Facility", "Customer Sat Survey", "Electrical Inspection", "Furnaces"];

function appHtml(a) {
  const tabs = (a.tabs ? ["Applications", ...tabNames] : tabNames)
    .map(n => `<div class="tab${n === "Workflow" ? " on" : ""}">${n}</div>`).join("");
  const logo = a.logo === "ring"
    ? '<div class="logo-ring"></div>'
    : `<div class="logo-icf"><svg viewBox="0 0 12 9" fill="none" stroke-width="1"><path stroke="#2a9fd6" d="M6 8V1"/><path stroke="#f2b632" d="M4 8 2 2"/><path stroke="#d9402c" d="M8 8l2-6"/><path stroke="#6cb33f" d="M9 8l3-3"/></svg><b>ICF</b></div>`;
  const check = (label, on) => `<div class="chk${on ? " on" : ""}"><i></i>${label}</div>`;
  return `
  <div class="app ${a.theme}">
    <div class="app-head">
      <span class="kicker">APPLICATION</span>
      <span class="app-id">#DMDPCR1527337816</span>
      <span class="vr"></span>
      <span class="stat">Status:</span>
      <span class="lead">Lead ${icon("down")}</span>
      ${icon("refresh", "mini")}
      ${icon("globe", "globe")}
      <span class="similar">246 Similar Premises</span>
      <div class="head-tools">${icon("search")}${icon("cols")}${icon("x")}</div>
    </div>
    <div class="meta">
      <div class="meta-item"><span>Status Updated:</span>${when}</div>
      <div class="meta-item"><span>Last Edited:</span>${when}</div>
      <div class="meta-item"><span>Received:</span>${when}</div>
      <div class="meta-item"><span>Entry Point:</span>${when}</div>
      ${icon("right")}
    </div>
    <div class="tools">${toolIcons.map(i => `<div class="tool">${icon(i)}</div>`).join("")}</div>
    <div class="info">
      <div class="info-cell"><span>Project Name</span><b>-</b></div>
      <div class="info-cell"><span>App ID</span><b class="mono">237126378618273687216837821FED23152</b></div>
      <div class="info-cell"><span>Costumer</span><b class="link">Naveed Khan</b></div>
      <div class="info-cell"><span>Utility</span><b class="link">Demo</b></div>
      <div class="info-cell"><span>Program</span><b class="link">C&amp;I Prescriptive</b></div>
      <div class="info-cell"><span>Ref ID</span><b class="mono">DMDDPCR23718647343</b></div>
      ${a.tabs ? '<div class="info-cell"><span>Open</span><b>-</b></div>' : "<div></div>"}
      ${icon("right", "open-chev")}
      <div class="counters info-end"><u>0</u><em>Flags</em><u>0</u><em>Tags</em><i></i></div>
    </div>
    <div class="tags">Tags <span>(0)</span>${icon("add")}</div>
    <div class="tabs">${tabs}</div>
    <div class="app-body">
      <div class="wf">
        <h3>Workflow</h3>
        <div class="history"><b>Show History</b><span class="toggle"></span></div>
        <div class="wf-card"><h4>To Do Tasks</h4>${check("Recents", true)}${check("Dependent")}${check("Automated")}</div>
        <div class="wf-card two"><h4>Completed Tasks</h4>${check("Ad-hoc")}${check("Automated")}</div>
        <div class="wf-card bare">${check("Skipped")}</div>
      </div>
      <div class="wf-main">
        <div class="status-top">
          <div><h5>Current Status</h5><h2>Lead</h2><p>Processing Mode: <b>Standard</b></p></div>
          <div class="links"><div>Add Ad-hoc Task ${icon("add")}</div><div>Take All Tasks ${icon("flag")}</div></div>
        </div>
        <div class="tally">
          <div class="tally-box"><div class="tally-num">0</div><div class="tally-txt"><h6>TASKS TO DO</h6><p><i class="dot-open"></i>TASK<i class="dot-full"></i>AUTOMATED<i class="dot-open"></i>TASK</p></div></div>
          <div class="tally-box"><div class="tally-num ok">0</div><div class="tally-txt"><h6>TASKS COMPLETED</h6><p><i class="dot-green"></i>AD HOC<i class="dot-full"></i>AUTOMATED</p></div></div>
        </div>
        <div class="task-list">${a.tasks.map(taskRow).join("")}</div>
      </div>
      <div class="forms">
        <h5>Forms</h5>
        ${formNames.map(n => `<div class="form-row">${n}${icon("right")}</div>`).join("")}
        <div class="pager">
          <div><span>Page</span> 1 <span>From</span> 3<br>1 - 6 <span>Items of</span> 14</div>
          <div class="pages">${icon("add")}<u class="cur">1</u><u>2</u><u>3</u>${icon("add")}</div>
        </div>
      </div>
    </div>
    <div class="app-foot">
      ${logo}
      <div class="dash"><span>DASHBOARD</span>My Dashboard</div>
      <div class="dash"><span>DASHBOARD</span>My Dashboard</div>
    </div>
  </div>`;
}

document.getElementById("frameOld").innerHTML = '<span class="frame-tag">Old</span>' + apps.slice(0, 2).map(appHtml).join("");
document.getElementById("frameNew").innerHTML = '<span class="frame-tag">New</span>' + apps.slice(2).map(appHtml).join("");
```
